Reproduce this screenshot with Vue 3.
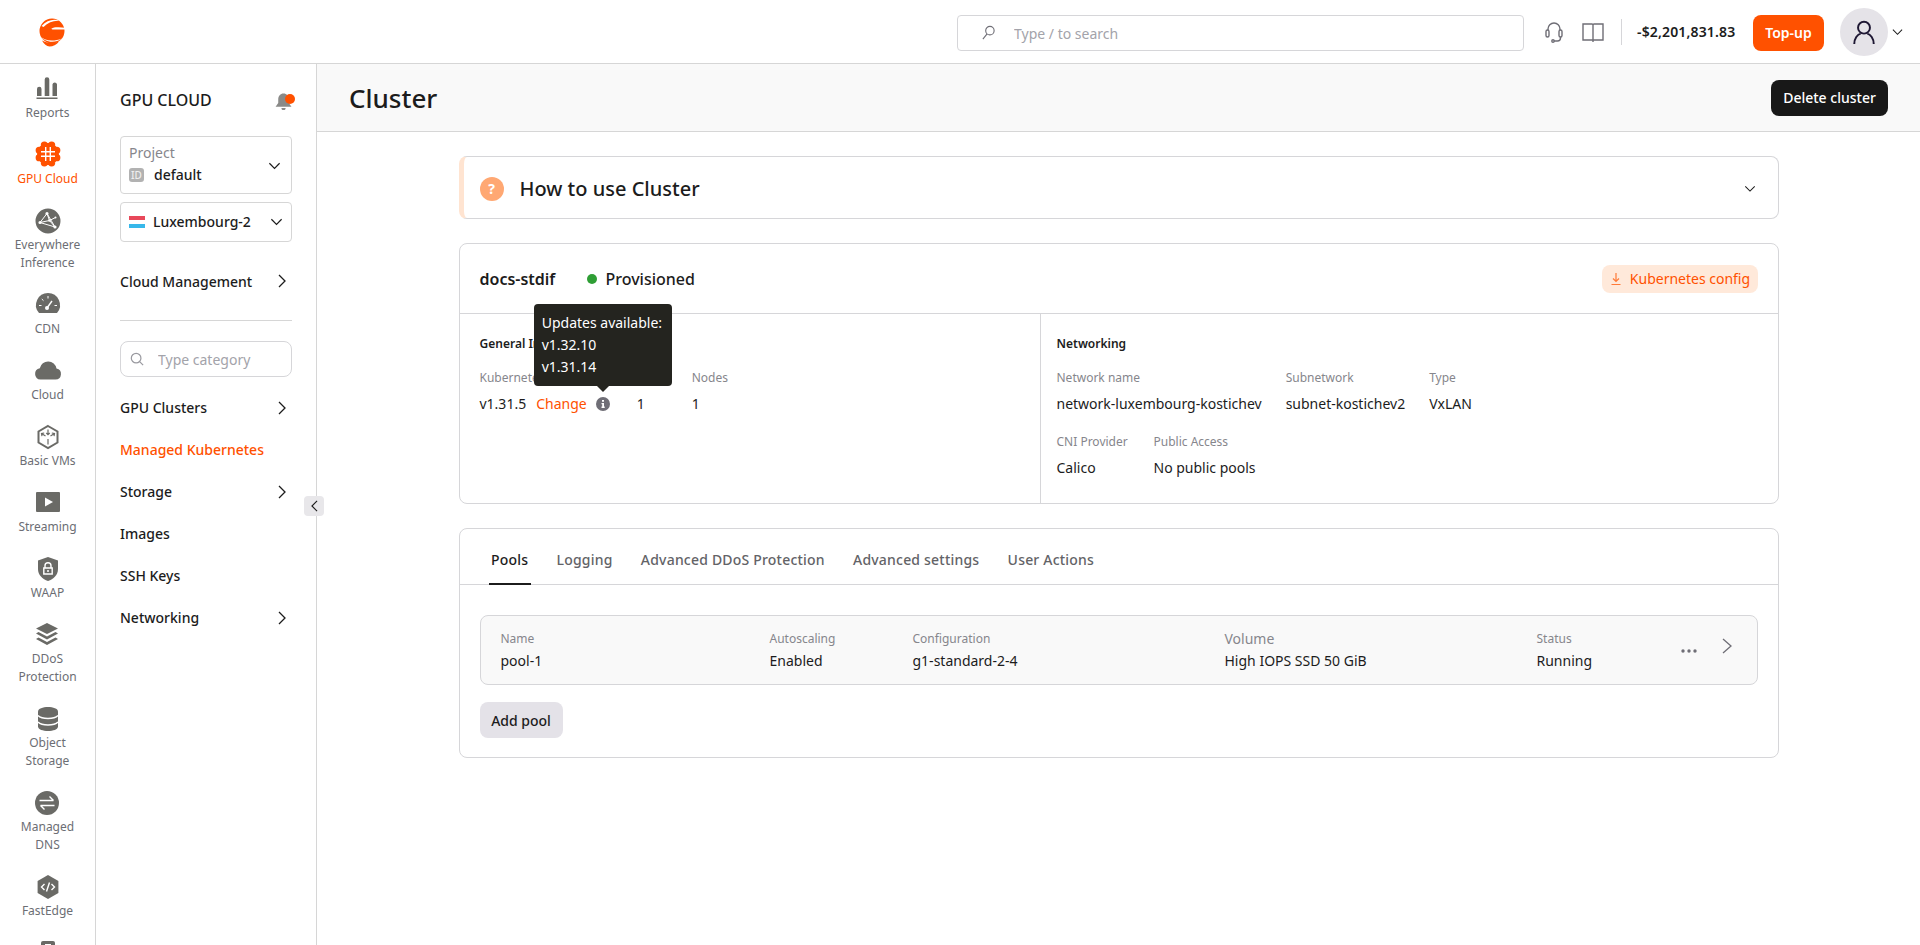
<script setup>
const dot = (x, y, r) => `M${x - r} ${y}a${r} ${r} 0 1 0 ${r * 2} 0a${r} ${r} 0 1 0 ${-r * 2} 0z`

const railItems = [
  {
    lines: ['Reports'],
    solid: 'M2 12a2.2 2.2 0 0 1 4.5 0v7H2zM9.7 2.6a2.3 2.3 0 0 1 4.6 0V19H9.7zM17.5 7.2a2.3 2.3 0 0 1 4.5 0V19h-4.5zM1.500 20.5h21V22h-21z'
  },
  {
    lines: ['GPU Cloud'],
    active: true,
    up: true,
    solid: [dot(12, 12, 11), dot(20.78, 15.64, 3.6), dot(20.78, 8.36, 3.6), dot(3.22, 15.64, 3.6), dot(3.22, 8.36, 3.6), dot(15.64, 20.78, 3.6), dot(8.36, 20.78, 3.6), dot(15.64, 3.22, 3.6), dot(8.36, 3.22, 3.6)].join(''),
    whiteLine: 'M9.7 5v14M14.3 5v14M5 9.7h14M5 14.3h14'
  },
  {
    lines: ['Everywhere', 'Inference'],
    solid: dot(12, 12, 12.5),
    thinLine: 'M11 4.500 4 13.500 19 18zM11 4.500l2.500 7-9.500 2M13.500 11.500l5.500 6.500M13.500 11.500l6-3',
    whiteFill: [dot(11, 4.5, 1.6), dot(4, 13.5, 1.6), dot(19, 18, 1.6), dot(13.5, 11.5, 1.3), dot(19.5, 8.5, 1)].join('')
  },
  {
    lines: ['CDN'],
    solid: 'M12 0a12 12 0 0 0-9.2 19.7c.3.2.5.3.9.3h16.6c.4 0 .6-.1.9-.3A12 12 0 0 0 12 0z',
    thinLine: 'M12 3v2.500M5.800 6l1.700 1.700M3 12.500h2.500M21 12.500h-2.500',
    whiteLine: 'M11 15l5-7',
    whiteFill: dot(11, 15, 2)
  },
  {
    lines: ['Cloud'],
    solid: 'M4.5 20.5h15a5.5 5.5 0 0 0 1-10.9 8.5 8.5 0 0 0-16.7-.4 5.7 5.7 0 0 0 .7 11.3z'
  },
  {
    lines: ['Basic VMs'],
    outline: 'M12 1l9.5 5.5v11L12 23 2.5 17.5v-11z',
    inner: 'M12 4.500V9.500M10.300 8l1.700 1.700L13.700 8M5.500 8.500 9.500 11M6 11.200l-.5-2.700 2.700-.5M18.500 8.500 14.500 11M18 11.200l.5-2.700-2.700-.5M12 14v5.500'
  },
  {
    lines: ['Streaming'],
    solid: 'M1 1h22a1 1 0 0 1 1 1v18a1 1 0 0 1-1 1H1a1 1 0 0 1-1-1V2a1 1 0 0 1 1-1z',
    whiteFill: 'M9 6.5v9l8-4.5z'
  },
  {
    lines: ['WAAP'],
    solid: 'M12 0l10 3.5V12c0 6-4.5 10-10 12C6.5 22 2 18 2 12V3.5z',
    whiteLine: 'M9 11V8.7a3 3 0 0 1 6 0V11M7.8 11h8.4v6H7.8z',
    whiteFill: dot(12, 14, 1)
  },
  {
    lines: ['DDoS', 'Protection'],
    solid: 'M12 0 23 5.5 12 11 1 5.5zM3.5 9 1 10.5l11 6 11-6L20.5 9 12 13.5zM3.5 14.5 1 16l11 6 11-6-2.5-1.5L12 19z'
  },
  {
    lines: ['Object', 'Storage'],
    solid: 'M2 4.5C2 1.5 7 0 12 0s10 1.5 10 4.5v15c0 3-5 4.5-10 4.5S2 22.5 2 19.5z',
    whiteLine: 'M2 8.5c2 2 6 3 10 3s8-1 10-3M2 15c2 2 6 3 10 3s8-1 10-3'
  },
  {
    lines: ['Managed', 'DNS'],
    solid: dot(12, 12, 12),
    whiteLine: 'M4.5 9.5H18.5M14.5 5.5l4 4M19.5 14.5H5.5M9.5 18.5l-4-4'
  },
  {
    lines: ['FastEdge'],
    solid: 'M12 0l10.4 6v12L12 24 1.6 18V6z',
    whiteLine: 'M8.5 9l-3 3 3 3M15.5 9l3 3-3 3M13.5 7.5l-3 9'
  },
  {
    lines: [],
    solid: 'M5 2a2 2 0 0 1 2-2h10a2 2 0 0 1 2 2v22H5z',
    whiteFill: 'M9 3h6v1.5H9z'
  }
]

const topNav = [{ label: 'Cloud Management', more: true }]
const nav = [
  { label: 'GPU Clusters', more: true },
  { label: 'Managed Kubernetes', active: true },
  { label: 'Storage', more: true },
  { label: 'Images' },
  { label: 'SSH Keys' },
  { label: 'Networking', more: true }
]
const tabs = ['Pools', 'Logging', 'Advanced DDoS Protection', 'Advanced settings', 'User Actions']
const pool = [
  { label: 'Name', value: 'pool-1' },
  { label: 'Autoscaling', value: 'Enabled' },
  { label: 'Configuration', value: 'g1-standard-2-4' },
  { label: 'Volume', value: 'High IOPS SSD 50 GiB', big: true },
  { label: 'Status', value: 'Running' }
]
</script>

<template>
  <div class="app">
    <header class="topbar">
      <div class="logo-box">
        <svg class="logo" viewBox="0 0 26 30">
          <path fill="#ff5100" d="M.5 14a12.5 12.5 0 1 1 25 0 12.500 12.500 0 0 1-25 0z" />
          <path fill="#fff" d="M2.500 9C8 3 15 1.500 21.500 4 15 3.200 9.500 5.200 4.500 10z" />
          <path fill="#fff" d="M12.500 11.500c2-1 4-1.500 7-1.300l6.500.5v1.800H14c-.8 0-1.500-.4-1.500-1z" />
          <path fill="#fff" d="M0 18c5 6 14 7 23 3.500-7 5-17 4.500-23-3.500z" />
          <path fill="#ff5100" d="M3 23.500c5 3 12 3 17 1-2.500 3.500-6 5-9.500 5-3 0-5.500-2.500-7.500-6z" />
        </svg>
      </div>
      <label class="search">
        <svg class="search-icon" viewBox="0 0 16 16">
          <circle cx="9.500" cy="6" r="4.500" />
          <path d="M6.500 9.500 2 15" />
        </svg>
        <input type="text" placeholder="Type / to search">
      </label>
      <svg class="tool" viewBox="0 0 24 24">
        <path d="M6 10V9a6 6 0 0 1 12 0v1" />
        <rect x="4" y="10" width="3" height="7" rx="1.500" />
        <rect x="17" y="10" width="3" height="7" rx="1.500" />
        <path d="M18.500 17v1a3 3 0 0 1-3 3H12" />
        <circle cx="11" cy="21" r="1.200" />
      </svg>
      <svg class="tool book" viewBox="0 0 24 24">
        <path d="M2 4h9a1 1 0 0 1 1 1v15H2zM22 4h-9a1 1 0 0 0-1 1v15h10zM12 20v2" />
      </svg>
      <span class="top-divider"></span>
      <span class="balance">-$2,201,831.83</span>
      <button class="top-up">Top-up</button>
      <span class="avatar">
        <svg viewBox="0 0 24 24">
          <circle cx="12" cy="8" r="5.500" />
          <path d="M3 23c0-5 3-9 6-9.500M21 23c0-5-3-9-6-9.500" />
        </svg>
      </span>
      <svg class="avatar-chevron" viewBox="0 0 12 8"><path d="M1 1.500 6 6.500 11 1.500" /></svg>
    </header>

    <div class="body">
      <nav class="rail">
        <a v-for="item in railItems" :key="item.solid || item.outline" class="rail-item" :class="{ active: item.active }">
          <svg class="rail-icon" :class="{ up: item.up }" viewBox="0 0 24 24">
            <path v-if="item.solid" class="solid" :d="item.solid" />
            <path v-if="item.outline" class="outline" :d="item.outline" />
            <path v-if="item.inner" class="inner" :d="item.inner" />
            <path v-if="item.thinLine" class="thin-line" :d="item.thinLine" />
            <path v-if="item.whiteLine" class="white-line" :d="item.whiteLine" />
            <path v-if="item.whiteFill" class="white-fill" :d="item.whiteFill" />
          </svg>
          <span class="rail-label">
            <span v-for="line in item.lines" :key="line">{{ line }}</span>
          </span>
        </a>
      </nav>

      <aside class="subnav">
        <div class="subnav-head">
          <span>GPU CLOUD</span>
          <span class="bell">
            <svg viewBox="0 0 17 17">
              <path d="M9 1.500c-3 0-5 2.500-5 5.500v3.500L1.500 14h15L14 10.500V7c0-3-2-5.500-5-5.500zM7 15.200a2 2 0 0 0 4 0z" />
            </svg>
            <i></i>
          </span>
        </div>

        <div class="select project">
          <div>
            <div class="select-label">Project</div>
            <div class="select-value">
              <span class="id-badge">ID</span>
              default
            </div>
          </div>
          <svg class="chevron-down" viewBox="0 0 14 8"><path d="M1.500 1 7 6.500 12.500 1" /></svg>
        </div>
        <div class="select region">
          <div class="select-value">
            <span class="flag"><i></i><i></i><i></i></span>
            Luxembourg-2
          </div>
          <svg class="chevron-down" viewBox="0 0 14 8"><path d="M1.500 1 7 6.500 12.500 1" /></svg>
        </div>

        <a v-for="n in topNav" :key="n.label" class="nav-row top-row">
          {{ n.label }}
          <svg v-if="n.more" class="chevron-right" viewBox="0 0 8 14"><path d="M1 1l6 6-6 6" /></svg>
        </a>
        <hr class="nav-divider">

        <label class="category">
          <svg viewBox="0 0 16 16">
            <circle cx="7" cy="7" r="5.500" />
            <path d="M11 11l4 4" />
          </svg>
          <input type="text" placeholder="Type category">
        </label>

        <div class="nav-list">
          <a v-for="n in nav" :key="n.label" class="nav-row" :class="{ active: n.active }">
            {{ n.label }}
            <svg v-if="n.more" class="chevron-right" viewBox="0 0 8 14"><path d="M1 1l6 6-6 6" /></svg>
          </a>
        </div>

        <button class="collapse">
          <svg viewBox="0 0 8 14"><path d="M7 1 1 7l6 6" /></svg>
        </button>
      </aside>

      <main class="main">
        <div class="page-head">
          <h1>Cluster</h1>
          <button class="delete">Delete cluster</button>
        </div>

        <div class="content">
          <section class="card howto">
            <span class="question">?</span>
            <h2>How to use Cluster</h2>
            <svg class="howto-chevron" viewBox="0 0 14 8"><path d="M1.500 1 7 6.500 12.500 1" /></svg>
          </section>

          <section class="card cluster">
            <div class="cluster-head">
              <span class="cluster-name">docs-stdif</span>
              <span class="status-dot"></span>
              <span class="status-text">Provisioned</span>
              <button class="config">
                <svg viewBox="0 0 14 14">
                  <path d="M7 1v8M4 6.500 7 9.500l3-3M2.500 12.500h9" />
                </svg>
                Kubernetes config
              </button>
            </div>
            <div class="cluster-body">
              <div class="panel general">
                <h3>General Information</h3>
                <div class="info-row">
                  <div class="field">
                    <span class="field-label">Kubernetes version</span>
                    <span class="field-value version">
                      v1.31.5
                      <a class="change">Change</a>
                      <span class="info">
                        <svg viewBox="0 0 14 14">
                          <circle cx="7" cy="7" r="7" fill="#6f6e76" />
                          <path fill="#fff" d="M6 3h2v1.800H6zM5.500 6H8v3.600h.7V11H5.500V9.600H6.200V7.300H5.500z" />
                        </svg>
                        <span class="tooltip">
                          <span>Updates available:</span>
                          <span>v1.32.10</span>
                          <span>v1.31.14</span>
                        </span>
                      </span>
                    </span>
                  </div>
                  <div class="field pools-col">
                    <span class="field-label">Pools</span>
                    <span class="field-value">1</span>
                  </div>
                  <div class="field">
                    <span class="field-label">Nodes</span>
                    <span class="field-value">1</span>
                  </div>
                </div>
              </div>
              <div class="panel networking">
                <h3>Networking</h3>
                <div class="info-row">
                  <div class="field">
                    <span class="field-label">Network name</span>
                    <span class="field-value">network-luxembourg-kostichev</span>
                  </div>
                  <div class="field">
                    <span class="field-label">Subnetwork</span>
                    <span class="field-value">subnet-kostichev2</span>
                  </div>
                  <div class="field">
                    <span class="field-label">Type</span>
                    <span class="field-value">VxLAN</span>
                  </div>
                </div>
                <div class="info-row second">
                  <div class="field cni-col">
                    <span class="field-label">CNI Provider</span>
                    <span class="field-value">Calico</span>
                  </div>
                  <div class="field">
                    <span class="field-label">Public Access</span>
                    <span class="field-value">No public pools</span>
                  </div>
                </div>
              </div>
            </div>
          </section>

          <section class="card pools">
            <div class="tabs">
              <a v-for="(t, i) in tabs" :key="t" class="tab" :class="{ active: i === 0 }">{{ t }}</a>
            </div>
            <div class="pools-body">
              <div class="pool-row">
                <div v-for="c in pool" :key="c.label" class="pool-cell">
                  <span class="pool-label" :class="{ big: c.big }">{{ c.label }}</span>
                  <span class="pool-value">{{ c.value }}</span>
                </div>
                <div class="pool-actions">
                  <svg class="dots" viewBox="0 0 16 4">
                    <circle cx="2" cy="2" r="1.700" />
                    <circle cx="8" cy="2" r="1.700" />
                    <circle cx="14" cy="2" r="1.700" />
                  </svg>
                  <svg class="pool-chevron" viewBox="0 0 10 16"><path d="M1 1l8 7-8 7" /></svg>
                </div>
              </div>
              <button class="add-pool">Add pool</button>
            </div>
          </section>
        </div>
      </main>
    </div>
  </div>
</template>

<style>
body {
  margin: 0;
  background: #fff;
}
</style>

<style scoped>
.app {
  height: 100vh;
  overflow: hidden;
  display: flex;
  flex-direction: column;
  font-family: "Noto Sans", sans-serif;
  font-size: 14px;
  color: #1c1c1c;
}
button {
  font-family: inherit;
  border: 0;
  cursor: pointer;
}
input {
  font-family: inherit;
  font-size: 14px;
  border: 0;
  outline: 0;
  background: transparent;
  padding: 0;
  flex: 1;
  min-width: 0;
}
input::placeholder {
  color: #a3a3aa;
  opacity: 1;
}

.topbar {
  height: 63px;
  flex: none;
  box-sizing: content-box;
  display: flex;
  align-items: center;
  border-bottom: 1px solid #d6d6d6;
  padding-right: 17px;
}
.logo-box {
  margin-left: 39px;
  margin-right: auto;
  display: flex;
}
.logo {
  width: 26px;
  height: 30px;
  overflow: hidden;
}
.search {
  width: 567px;
  height: 36px;
  box-sizing: border-box;
  border: 1px solid #d6d6d9;
  border-radius: 4px;
  display: flex;
  align-items: center;
  gap: 18px;
  padding-left: 23px;
  position: relative;
  top: 1px;
}
.search input {
  padding-top: 1px;
}
.search-icon {
  width: 15px;
  height: 15px;
  fill: none;
  stroke: #6f6e76;
  stroke-width: 1.2;
}
.tool {
  width: 24px;
  height: 24px;
  fill: none;
  stroke: #6f6e76;
  stroke-width: 1.400;
  margin-left: 18px;
}
.book {
  margin-left: 15px;
}
.top-divider {
  width: 1px;
  height: 26px;
  background: #d6d6d9;
  margin-left: 16px;
}
.balance {
  margin-left: 15px;
  font-weight: 600;
  letter-spacing: .15px;
  width: 99px;
  white-space: nowrap;
}
.top-up {
  margin-left: 17px;
  width: 71px;
  height: 36px;
  background: #ff5100;
  color: #fff;
  border-radius: 8px;
  font-size: 14px;
  font-weight: 600;
  padding: 0;
  position: relative;
  top: 1px;
}
.avatar {
  margin-left: 16px;
  width: 48px;
  height: 48px;
  border-radius: 50%;
  background: #e5e3e8;
  display: flex;
  align-items: center;
  justify-content: center;
}
.avatar svg {
  width: 26px;
  height: 26px;
  fill: none;
  stroke: #1e1733;
  stroke-width: 1.800;
}
.avatar-chevron {
  width: 11px;
  height: 8px;
  margin-left: 4px;
  fill: none;
  stroke: #1c1c1c;
  stroke-width: 1.100;
}

.body {
  flex: 1;
  min-height: 0;
  display: flex;
}

.rail {
  width: 95px;
  flex: none;
  box-sizing: content-box;
  border-right: 1px solid #d6d6d6;
  padding-top: 13px;
  display: flex;
  flex-direction: column;
  align-items: center;
  gap: 21px;
  overflow: hidden;
}
.rail-item {
  display: flex;
  flex-direction: column;
  align-items: center;
  gap: 3px;
  color: #6a6a66;
  flex: none;
}
.rail-icon {
  width: 24px;
  height: 24px;
  overflow: visible;
}
.rail-icon.up {
  margin-top: -1px;
  margin-bottom: 1px;
}
.solid {
  fill: currentColor;
}
.outline {
  fill: none;
  stroke: currentColor;
  stroke-width: 2;
}
.inner {
  fill: none;
  stroke: currentColor;
  stroke-width: 1.200;
}
.thin-line {
  fill: none;
  stroke: #fff;
  stroke-width: 1;
}
.white-line {
  fill: none;
  stroke: #fff;
  stroke-width: 1.400;
}
.white-fill {
  fill: #fff;
}
.rail-label {
  font-size: 12px;
  line-height: 18px;
  color: #6c6e74;
  text-align: center;
  display: flex;
  flex-direction: column;
  white-space: nowrap;
}
.rail-item.active {
  color: #ff5100;
}
.rail-item.active .rail-label {
  color: #ff5100;
}

.subnav {
  width: 172px;
  flex: none;
  padding: 25px 24px 0;
  border-right: 1px solid #d6d6d6;
  position: relative;
}
.subnav-head {
  display: flex;
  justify-content: space-between;
  align-items: center;
  font-size: 16px;
  line-height: 22px;
  font-weight: 500;
  margin-bottom: 25px;
}
.bell {
  position: relative;
  width: 18px;
  height: 18px;
  margin-top: 1px;
}
.bell svg {
  width: 18px;
  height: 18px;
  fill: #8a8a88;
  display: block;
}
.bell i {
  position: absolute;
  width: 10px;
  height: 10px;
  right: -3px;
  top: 2px;
  border-radius: 50%;
  background: #ff5100;
}
.select {
  box-sizing: border-box;
  border: 1px solid #d6d6d6;
  border-radius: 4px;
  display: flex;
  align-items: center;
  justify-content: space-between;
  padding: 0 10px 0 8px;
}
.project {
  height: 58px;
  margin-bottom: 8px;
  padding-bottom: 2px;
}
.project .chevron-down {
  margin-top: 4px;
}
.region {
  height: 40px;
  margin-bottom: 18px;
  padding-right: 8px;
}
.select-label {
  color: #86868c;
  line-height: 20px;
  margin-bottom: 1px;
}
.select-value {
  display: flex;
  align-items: center;
  gap: 8px;
  line-height: 22px;
  font-weight: 500;
}
.chevron-down {
  width: 13px;
  height: 8px;
  fill: none;
  stroke: #1c1c1c;
  stroke-width: 1.300;
}
.id-badge {
  width: 15px;
  height: 14px;
  border-radius: 3px;
  background: #b2b2b2;
  color: #eee;
  font-size: 10px;
  line-height: 14px;
  font-weight: 500;
  text-align: center;
  margin-right: 2px;
}
.flag {
  width: 16px;
  height: 12px;
  display: flex;
  flex-direction: column;
}
.flag i {
  flex: 1;
}
.flag i:nth-child(1) {
  background: #e8485a;
}
.flag i:nth-child(2) {
  background: #fff;
}
.flag i:nth-child(3) {
  background: #37b8ea;
}
.nav-row {
  height: 42px;
  display: flex;
  align-items: center;
  justify-content: space-between;
  font-weight: 500;
  padding-right: 6px;
}
.nav-row.active {
  color: #ff5100;
}
.chevron-right {
  width: 8px;
  height: 14px;
  fill: none;
  stroke: #1c1c1c;
  stroke-width: 1.300;
}
.nav-divider {
  border: 0;
  border-top: 1px solid #d6d6d6;
  margin: 18px 0 20px;
}
.category {
  height: 36px;
  box-sizing: border-box;
  border: 1px solid #d6d6d9;
  border-radius: 8px;
  display: flex;
  align-items: center;
  gap: 14px;
  padding-left: 9px;
  margin-bottom: 9.500px;
}
.category svg {
  width: 14px;
  height: 14px;
  fill: none;
  stroke: #9a9aa0;
  stroke-width: 1.400;
}
.collapse {
  position: absolute;
  left: 208px;
  top: 432px;
  width: 20px;
  height: 20px;
  padding: 0;
  background: #e8e7ea;
  border-radius: 4px;
  display: flex;
  align-items: center;
  justify-content: center;
}
.collapse svg {
  width: 7px;
  height: 12px;
  fill: none;
  stroke: #1c1c1c;
  stroke-width: 1.300;
}

.main {
  flex: 1;
  min-width: 0;
}
.page-head {
  height: 67px;
  background: #f9f9f9;
  border-bottom: 1px solid #d6d6d6;
  display: flex;
  align-items: center;
  justify-content: space-between;
  padding: 0 32px;
}
h1 {
  margin: 0;
  font-size: 26px;
  font-weight: 500;
}
.delete {
  width: 117px;
  height: 36px;
  background: #181818;
  color: #fff;
  border-radius: 8px;
  font-size: 14px;
  font-weight: 500;
}
.content {
  width: 1320px;
  margin: 0 auto;
  padding-top: 24px;
  display: flex;
  flex-direction: column;
  gap: 24px;
}
.card {
  box-sizing: border-box;
  border: 1px solid #d6d6d9;
  border-radius: 8px;
  background: #fff;
}
.howto {
  height: 63px;
  border-left: 5px solid #ffe4d1;
  padding: 2px 20px 0 16px;
  display: flex;
  align-items: center;
}
.question {
  width: 24px;
  height: 24px;
  border-radius: 50%;
  background: #ffa873;
  color: #fff;
  font-size: 14px;
  font-weight: 700;
  line-height: 24px;
  text-align: center;
  margin-right: 16px;
}
h2 {
  margin: 0;
  font-size: 20px;
  font-weight: 500;
}
.howto-chevron {
  width: 12px;
  height: 8px;
  fill: none;
  stroke: #1c1c1c;
  stroke-width: 1.200;
  margin-left: auto;
  margin-right: 2px;
}
.cluster {
  height: 261px;
}
.cluster-head {
  height: 69px;
  border-bottom: 1px solid #d6d6d9;
  display: flex;
  align-items: center;
  padding: 0 20px;
  font-size: 16px;
}
.cluster-name {
  font-weight: 600;
  width: 107px;
}
.status-dot {
  width: 10px;
  height: 10px;
  border-radius: 50%;
  background: #2f9e35;
  margin-right: 9px;
}
.status-text {
  font-weight: 500;
}
.config {
  margin-left: auto;
  width: 156px;
  height: 28px;
  border-radius: 8px;
  background: #ffe9da;
  color: #ff5100;
  font-size: 14px;
  display: flex;
  align-items: center;
  justify-content: center;
  gap: 7px;
  padding: 0;
  white-space: nowrap;
}
.config svg {
  width: 14px;
  height: 14px;
  fill: none;
  stroke: #ff7a38;
  stroke-width: 1.200;
}
.cluster-body {
  height: 189px;
  display: flex;
}
.panel {
  box-sizing: border-box;
  padding: 21px 16px 0 20px;
}
.general {
  width: 581px;
  border-right: 1px solid #d6d6d9;
  flex: none;
}
.networking {
  padding-left: 16px;
}
h3 {
  margin: 0 0 16px;
  font-size: 12px;
  line-height: 18px;
  font-weight: 600;
}
.info-row {
  display: flex;
  gap: 24px;
}
.info-row.second {
  margin-top: 19px;
}
.field {
  display: flex;
  flex-direction: column;
  gap: 7px;
}
.cni-col {
  width: 73px;
}
.field-label {
  font-size: 12px;
  line-height: 18px;
  color: #86868c;
  white-space: nowrap;
}
.field-value {
  line-height: 20px;
  white-space: nowrap;
}
.version {
  display: flex;
  align-items: center;
  gap: 10px;
  padding-right: 3px;
}
.change {
  color: #ff5100;
}
.info {
  position: relative;
  display: flex;
  margin-left: -1px;
}
.info svg {
  width: 14px;
  height: 14px;
}
.tooltip {
  position: absolute;
  bottom: calc(100% + 11px);
  left: 50%;
  transform: translateX(-50%);
  width: 138px;
  box-sizing: border-box;
  padding: 8px;
  background: #24241f;
  color: #fff;
  border-radius: 4px;
  line-height: 22px;
  display: flex;
  flex-direction: column;
  z-index: 2;
}
.tooltip::after {
  content: "";
  position: absolute;
  top: 100%;
  left: 50%;
  margin-left: -6px;
  border: 6px solid transparent;
  border-top-color: #24241f;
  border-bottom: 0;
}
.pools-col {
  width: 31px;
}

.pools {
  height: 230px;
}
.tabs {
  height: 55px;
  box-sizing: content-box;
  border-bottom: 1px solid #d6d6d9;
  display: flex;
  gap: 23.300px;
  padding-left: 29px;
}
.tab {
  box-sizing: border-box;
  height: 56px;
  padding: 21px 2.500px 0;
  line-height: 20px;
  font-weight: 500;
  letter-spacing: .2px;
  color: #636367;
  white-space: nowrap;
}
.tab.active {
  color: #1c1c1c;
  border-bottom: 2px solid #1c1c1c;
}
.pools-body {
  padding: 30px 20px 0;
}
.pool-row {
  height: 70px;
  box-sizing: border-box;
  border: 1px solid #d6d6d9;
  border-radius: 8px;
  background: #f9f9f9;
  padding: 14px 0 0 20px;
  display: grid;
  grid-template-columns: 269px 143px 312px 312px 1fr auto;
}
.pool-cell {
  display: flex;
  flex-direction: column;
  gap: 3px;
}
.pool-label {
  font-size: 12px;
  line-height: 18px;
  color: #86868c;
}
.pool-label.big {
  font-size: 14px;
}
.pool-value {
  line-height: 20px;
}
.pool-actions {
  display: flex;
  align-items: center;
  gap: 25px;
  height: 34px;
  padding-right: 25px;
}
.dots {
  width: 16px;
  height: 4px;
  fill: #6f6e76;
  margin-top: 7px;
}
.pool-chevron {
  width: 10px;
  height: 16px;
  fill: none;
  stroke: #6f6e76;
  stroke-width: 1.300;
  margin-bottom: 2px;
}
.add-pool {
  margin-top: 17px;
  width: 83px;
  height: 36px;
  background: #e4e2e8;
  color: #1c1c1c;
  border-radius: 8px;
  font-size: 14px;
  font-weight: 500;
  display: block;
  padding: 0;
}
</style>
